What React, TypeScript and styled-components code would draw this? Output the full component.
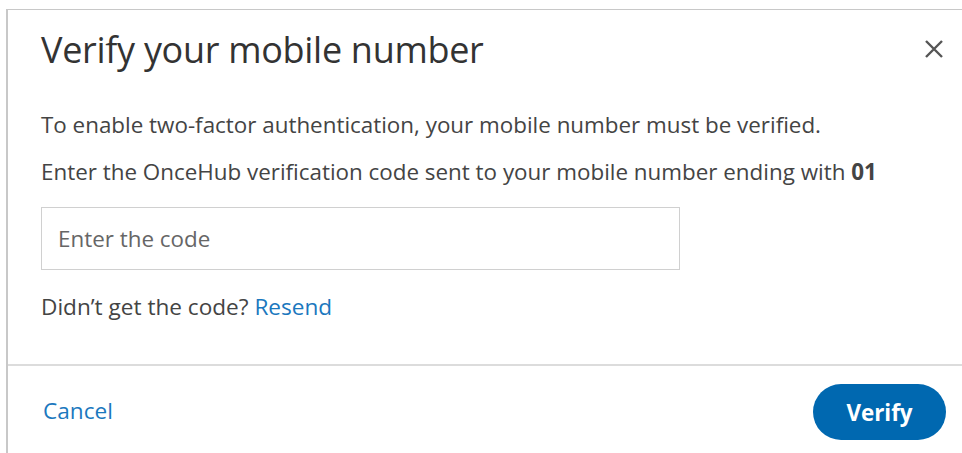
import React from 'react';
import styled, { createGlobalStyle } from 'styled-components';

const GlobalStyle = createGlobalStyle`
  html, body {
    margin: 0;
    background: #fff;
  }
  body {
    font-family: 'Open Sans', 'Liberation Sans', sans-serif;
    color: #444;
  }
`;

const Page = styled.div`
  padding: 9px 0 0 6px;
  height: 453px;
  box-sizing: border-box;
  overflow: hidden;
`;

const Dialog = styled.div`
  border-top: 1px solid #c8c8c8;
  border-left: 2px solid #c8c8c8;
  height: 100%;
  display: flex;
  flex-direction: column;
`;

const Header = styled.div`
  display: flex;
  align-items: center;
  justify-content: space-between;
  padding: 10px 17px 0 33px;
  height: 58px;
`;

const Title = styled.h1`
  margin: 0;
  font-size: 36px;
  font-weight: 400;
  color: #333;
  letter-spacing: -0.3px;
`;

const CloseButton = styled.button`
  border: none;
  background: none;
  padding: 0;
  width: 22px;
  height: 22px;
  display: flex;
  align-items: center;
  justify-content: center;
  cursor: pointer;
`;

const Body = styled.div`
  padding: 32px 0 42px 33px;
  display: flex;
  flex-direction: column;
`;

const Text = styled.p`
  margin: 0 0 17px;
  font-size: 22.4px;
  line-height: 30px;
  color: #444;
`;

const CodeInput = styled.input`
  width: 639px;
  height: 63px;
  box-sizing: border-box;
  border: 1px solid #d0d0d0;
  padding: 0 16px;
  margin-top: 3px;
  font-family: inherit;
  font-size: 22.4px;
  color: #333;
  outline: none;

  &::placeholder {
    color: #666;
  }
`;

const ResendRow = styled.div`
  margin-top: 22px;
  font-size: 22.6px;
  line-height: 30px;
  color: #444;
`;

const Link = styled.a`
  color: #1b78be;
  text-decoration: none;
  cursor: pointer;
`;

const Footer = styled.div`
  border-top: 2px solid #dcdcdc;
  display: flex;
  align-items: center;
  justify-content: space-between;
  padding: 18px 16px 0 35px;
`;

const CancelLink = styled(Link)`
  font-size: 22.6px;
  margin-top: -3px;
`;

const VerifyButton = styled.button`
  background: #0068b0;
  color: #fff;
  border: none;
  border-radius: 28px;
  width: 133px;
  height: 56px;
  font-family: inherit;
  font-size: 22.4px;
  font-weight: 700;
  cursor: pointer;
`;

const App: React.FC = () => {
  return (
    <>
      <GlobalStyle />
      <Page>
        <Dialog>
          <Header>
            <Title>Verify your mobile number</Title>
            <CloseButton aria-label="Close">
              <svg width="20" height="20" viewBox="0 0 20 20">
                <path d="M2 2 L18 18 M18 2 L2 18" stroke="#555" strokeWidth="2.4" />
              </svg>
            </CloseButton>
          </Header>
          <Body>
            <Text>To enable two-factor authentication, your mobile number must be verified.</Text>
            <Text>
              Enter the OnceHub verification code sent to your mobile number ending with <b>01</b>
            </Text>
            <CodeInput placeholder="Enter the code" />
            <ResendRow>
              Didn’t get the code? <Link>Resend</Link>
            </ResendRow>
          </Body>
          <Footer>
            <CancelLink>Cancel</CancelLink>
            <VerifyButton>Verify</VerifyButton>
          </Footer>
        </Dialog>
      </Page>
    </>
  );
};

export default App;
